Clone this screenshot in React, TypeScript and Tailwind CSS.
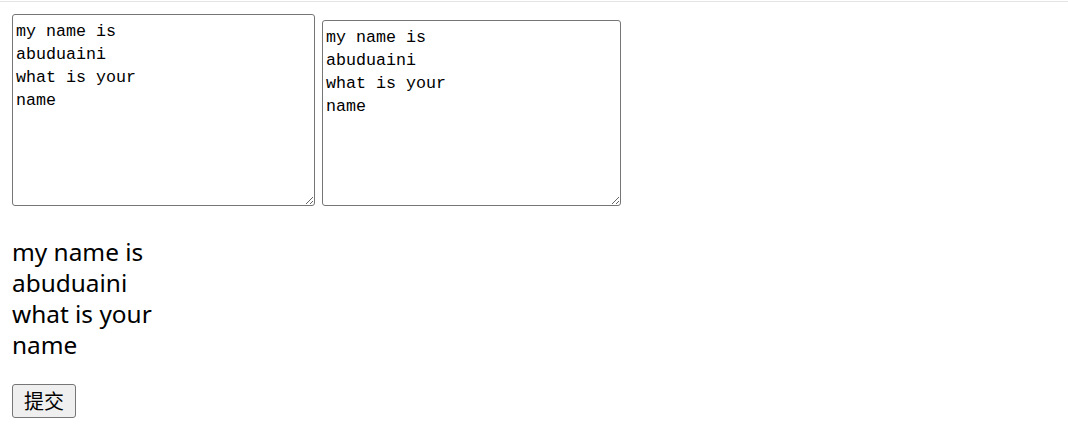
const text = "my name is\nabuduaini\nwhat is your\nname";

export default function App() {
  return (
    <div className="min-h-screen bg-white text-black">
      <div className="pt-[1px]">
        <div className="border-t border-[#e3e3e3]" />
      </div>
      <div className="px-3 pt-3">
        <div className="flex items-end gap-[7px]">
          <textarea
            defaultValue={text}
            className="w-[303px] h-[192px] border border-[#767676] rounded-[3px] px-[3px] py-[5px] text-[16.67px] leading-[23px] text-black outline-none"
            style={{ fontFamily: '"Liberation Mono", "DejaVu Sans Mono", monospace' }}
          />
          <textarea
            defaultValue={text}
            className="w-[299px] h-[186px] border border-[#767676] rounded-[3px] px-[3px] py-[5px] text-[16.67px] leading-[23px] text-black outline-none"
            style={{ fontFamily: '"Liberation Mono", "DejaVu Sans Mono", monospace' }}
          />
        </div>
        <p className="mt-[30px] whitespace-pre-line text-[24.4px] leading-[31px] font-['Noto_Sans',sans-serif]">
          {text}
        </p>
        <button className="mt-[24px] w-[64px] h-[34px] border border-[#767676] rounded-[3px] bg-[#efefef] text-[20px] leading-none text-black font-['Noto_Sans_CJK_SC',sans-serif]">
          提交
        </button>
      </div>
    </div>
  );
}
